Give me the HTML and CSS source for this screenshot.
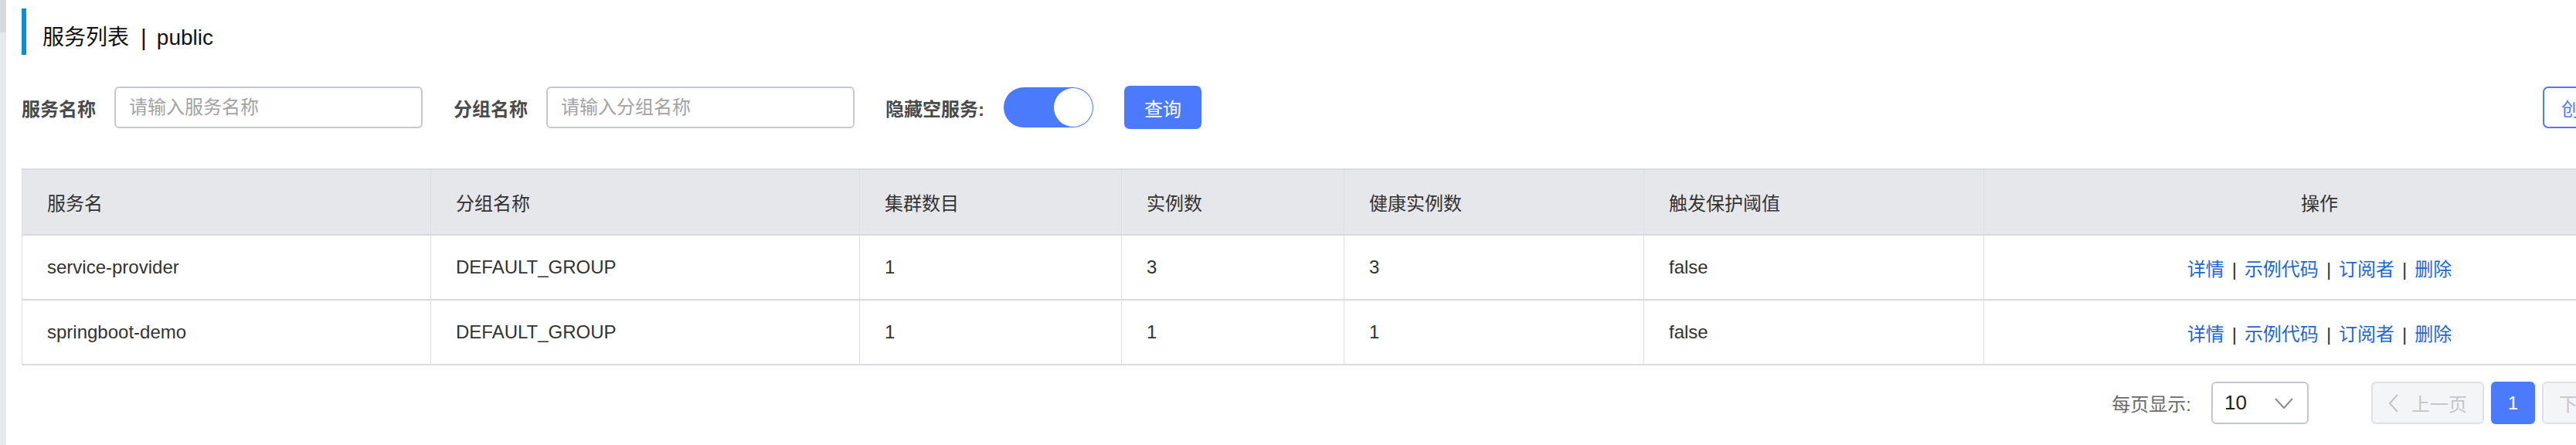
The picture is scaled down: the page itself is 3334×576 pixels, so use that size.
FILE: index.html
```html
<!DOCTYPE html>
<html lang="zh-CN">
<head>
<meta charset="utf-8">
<title>服务列表</title>
<link rel="stylesheet" href="styles.css">
</head>
<body>
<div class="app">
  <aside class="rail"><div class="rail-thumb"></div></aside>
  <main class="main">
    <h1 class="title">服务列表<span class="title-sep">|</span>public</h1>

    <div class="filters">
      <div class="fgroup">
        <label class="flabel">服务名称</label>
        <input class="finput" type="text" placeholder="请输入服务名称">
      </div>
      <div class="fgroup">
        <label class="flabel">分组名称</label>
        <input class="finput" type="text" placeholder="请输入分组名称">
      </div>
      <div class="fgroup">
        <span class="flabel">隐藏空服务:</span>
        <span class="switch"><span class="knob"></span></span>
      </div>
      <button class="btn btn-primary">查询</button>
      <button class="btn btn-outline">创建服务</button>
    </div>

    <table class="grid">
      <colgroup>
        <col class="c1"><col class="c2"><col class="c3"><col class="c4"><col class="c5"><col class="c6"><col class="c7">
      </colgroup>
      <thead>
        <tr>
          <th>服务名</th>
          <th>分组名称</th>
          <th>集群数目</th>
          <th>实例数</th>
          <th>健康实例数</th>
          <th>触发保护阈值</th>
          <th class="center">操作</th>
        </tr>
      </thead>
      <tbody>
        <tr>
          <td>service-provider</td>
          <td>DEFAULT_GROUP</td>
          <td>1</td>
          <td>3</td>
          <td>3</td>
          <td>false</td>
          <td class="center"><a class="act">详情</a><span class="sep">|</span><a class="act">示例代码</a><span class="sep">|</span><a class="act">订阅者</a><span class="sep">|</span><a class="act">删除</a></td>
        </tr>
        <tr>
          <td>springboot-demo</td>
          <td>DEFAULT_GROUP</td>
          <td>1</td>
          <td>1</td>
          <td>1</td>
          <td>false</td>
          <td class="center"><a class="act">详情</a><span class="sep">|</span><a class="act">示例代码</a><span class="sep">|</span><a class="act">订阅者</a><span class="sep">|</span><a class="act">删除</a></td>
        </tr>
      </tbody>
    </table>

    <div class="pager">
      <span class="pager-label">每页显示:</span>
      <div class="select">
        <span class="select-val">10</span>
        <svg class="chev" width="26" height="16" viewBox="0 0 26 16"><path d="M2 2 L13 14 L24 2" fill="none" stroke="#8a8d95" stroke-width="2"/></svg>
      </div>
      <button class="pbtn pbtn-disabled prev"><svg class="lt" width="14" height="26" viewBox="0 0 14 26"><path d="M12 2 L2 13 L12 24" fill="none" stroke="#c3c5cb" stroke-width="2.2"/></svg>上一页</button>
      <button class="pbtn pbtn-current">1</button>
      <button class="pbtn pbtn-disabled next">下一页<svg class="gt" width="14" height="26" viewBox="0 0 14 26"><path d="M2 2 L12 13 L2 24" fill="none" stroke="#c3c5cb" stroke-width="2.2"/></svg></button>
    </div>
  </main>
</div>
</body>
</html>
```

FILE: styles.css
```css
* { box-sizing: border-box; }

html, body {
  margin: 0;
  padding: 0;
  background: #ffffff;
  overflow: hidden;
}

body {
  font-family: "Liberation Sans", "Noto Sans CJK SC", sans-serif;
  color: #333333;
}

.app {
  display: flex;
  width: 3334px;
  height: 576px;
  overflow: hidden;
}

.rail {
  flex: 0 0 8px;
  display: flex;
  flex-direction: column;
  background: #e7e9ed;
}

.rail-thumb {
  height: 42px;
  background: #d6d9de;
}

.main {
  flex: 0 0 auto;
  width: 3428px;
  padding-left: 20px;
}

/* title */
.title {
  margin: 11px 0 0 0;
  height: 60px;
  border-left: 6px solid #0b8fd0;
  padding: 16px 0 0 21px;
  font-size: 28px;
  line-height: 40px;
  font-weight: normal;
  color: #111111;
  display: flex;
  align-items: center;
}

.title-sep {
  margin: 0 13px 0 15px;
  font-size: 30px;
}

/* filters */
.filters {
  margin-top: 40px;
  display: flex;
  align-items: center;
  height: 56px;
}

.fgroup {
  display: flex;
  align-items: center;
  margin-right: 40px;
}

.flabel {
  font-size: 24px;
  font-weight: bold;
  color: #4a4a4a;
  margin-right: 24px;
  white-space: nowrap;
}

.finput {
  width: 399px;
  height: 54px;
  border: 2px solid #c6c8cf;
  border-radius: 6px;
  padding: 0 17px;
  font-family: inherit;
  font-size: 24px;
  color: #333;
  outline: none;
}

.finput::placeholder {
  color: #a3a3a3;
}

.switch {
  width: 116px;
  height: 52px;
  border-radius: 26px;
  background: #4b7bfc;
  display: flex;
  align-items: center;
  justify-content: flex-end;
  padding: 0 1px;
  margin-left: 1px;
}

.knob {
  width: 50px;
  height: 50px;
  border-radius: 50%;
  background: #ffffff;
}

.btn {
  height: 56px;
  font-family: inherit;
  font-size: 24px;
  border-radius: 7px;
  cursor: pointer;
}

.btn-primary {
  width: 100px;
  background: #4b7bfc;
  border: none;
  color: #ffffff;
}

.btn-outline {
  margin-left: auto;
  width: 145px;
  height: 54px;
  background: #ffffff;
  border: 2px solid #4b7bfc;
  color: #4b7bfc;
  padding: 0 0 0 22px;
  text-align: left;
}

/* table */
.grid {
  margin-top: 51px;
  width: 3408px;
  border-collapse: collapse;
  table-layout: fixed;
  font-size: 24px;
}

.c1 { width: 529px; }
.c2 { width: 555px; }
.c3 { width: 339px; }
.c4 { width: 288px; }
.c5 { width: 388px; }
.c6 { width: 440px; }
.c7 { width: 869px; }

.grid th,
.grid td {
  border-left: 1px solid #dcdde2;
  border-right: 1px solid #dcdde2;
  border-bottom: 2px solid #d9dadf;
  padding: 0 32px;
  text-align: left;
  white-space: nowrap;
  color: #333333;
}

.grid thead th {
  height: 85px;
  background: #e6e7eb;
  font-weight: normal;
  border-top: 2px solid #d9dadf;
}

.grid tbody td {
  height: 84px;
}

.grid .center {
  text-align: center;
}

.act {
  color: #1d67d1;
  text-decoration: none;
}

.sep {
  margin: 0 10px;
  color: #333333;
}

/* pager */
.pager {
  margin-top: 21px;
  width: 3408px;
  display: flex;
  justify-content: flex-end;
  align-items: center;
}

.pager-label {
  font-size: 24px;
  color: #6b6b6b;
  margin-right: 26px;
}

.select {
  width: 126px;
  height: 55px;
  border: 2px solid #c4c6cd;
  border-radius: 6px;
  display: flex;
  align-items: center;
  justify-content: space-between;
  padding: 0 17px 0 15px;
  margin-right: 81px;
}

.select-val {
  font-size: 26px;
  color: #222222;
}

.pbtn {
  height: 55px;
  border-radius: 6px;
  font-family: inherit;
  font-size: 24px;
  display: flex;
  align-items: center;
  justify-content: center;
}

.pbtn-disabled {
  width: 146px;
  background: #f4f5f7;
  border: 2px solid #e0e1e5;
  color: #c3c5cb;
}

.prev .lt { margin-right: 16px; }
.next .gt { margin-left: 16px; }

.pbtn-current {
  width: 57px;
  margin: 0 9px;
  background: #4b7bfc;
  border: none;
  color: #ffffff;
}
```
